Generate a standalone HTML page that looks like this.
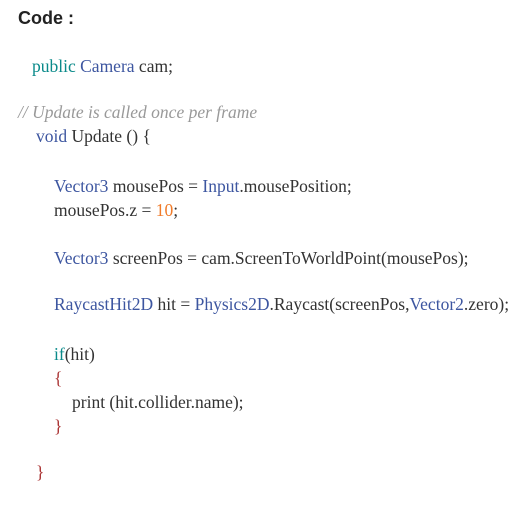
<!DOCTYPE html>
<html><head><meta charset="utf-8"><style>
body{margin:0;width:530px;height:516px;background:#fff;position:relative;overflow:hidden;font-family:"Liberation Serif",serif;font-size:17.5px;color:#333}
.l{position:absolute;white-space:pre;line-height:20px}
.h{font-family:"Liberation Sans",sans-serif;font-weight:bold;font-size:18px;color:#222}
.k{color:#0a8a8a}.t{color:#3d56a0}.n{color:#f07b2a}.c{color:#999;font-style:italic}.b{color:#a33}
</style></head><body>
<div class="l h" style="left:18px;top:8px">Code :</div>
<div class="l" style="left:32px;top:56px"><span class="k">public</span> <span class="t">Camera</span> cam;</div>
<div class="l c" style="left:18px;top:102px">// Update is called once per frame</div>
<div class="l" style="left:36px;top:126px"><span class="t">void</span> Update () {</div>
<div class="l" style="left:54px;top:176px"><span class="t">Vector3</span> mousePos = <span class="t">Input</span>.mousePosition;</div>
<div class="l" style="left:54px;top:200px">mousePos.z = <span class="n">10</span>;</div>
<div class="l" style="left:54px;top:248px"><span class="t">Vector3</span> screenPos = cam.ScreenToWorldPoint(mousePos);</div>
<div class="l" style="left:54px;top:294px"><span class="t">RaycastHit2D</span> hit = <span class="t">Physics2D</span>.Raycast(screenPos,<span class="t">Vector2</span>.zero);</div>
<div class="l" style="left:54px;top:344px"><span class="k">if</span>(hit)</div>
<div class="l b" style="left:54px;top:368px">{</div>
<div class="l" style="left:72px;top:392px">print (hit.collider.name);</div>
<div class="l b" style="left:54px;top:416px">}</div>
<div class="l b" style="left:36px;top:462px">}</div>
</body></html>
